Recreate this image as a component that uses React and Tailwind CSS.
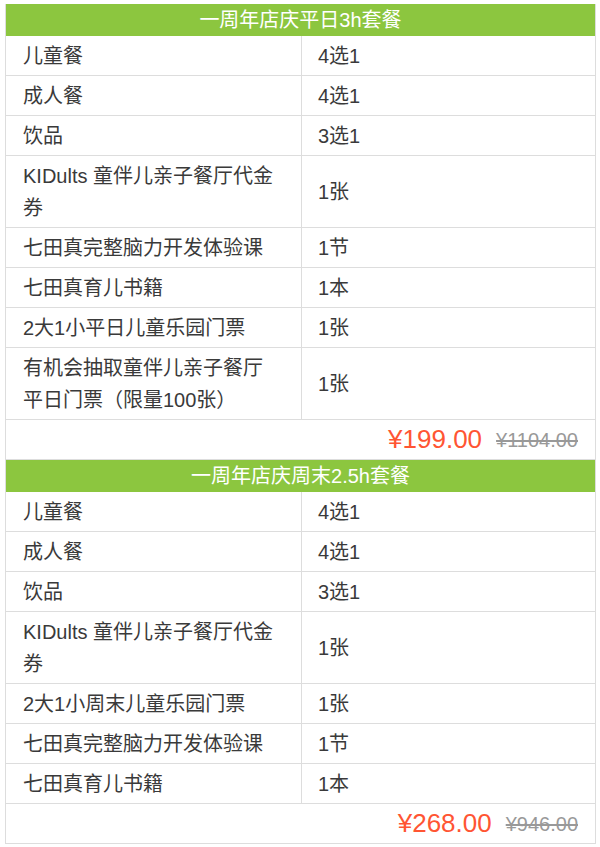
import React from 'react';

const taocan = [
    {
        titulo: '一周年店庆平日3h套餐',
        itens: [
            ['儿童餐', '4选1'],
            ['成人餐', '4选1'],
            ['饮品', '3选1'],
            ['KIDults 童伴儿亲子餐厅代金券', '1张'],
            ['七田真完整脑力开发体验课', '1节'],
            ['七田真育儿书籍', '1本'],
            ['2大1小平日儿童乐园门票', '1张'],
            ['有机会抽取童伴儿亲子餐厅平日门票（限量100张）', '1张'],
        ],
        preco: '¥199.00',
        original: '¥1104.00',
    },
    {
        titulo: '一周年店庆周末2.5h套餐',
        itens: [
            ['儿童餐', '4选1'],
            ['成人餐', '4选1'],
            ['饮品', '3选1'],
            ['KIDults 童伴儿亲子餐厅代金券', '1张'],
            ['2大1小周末儿童乐园门票', '1张'],
            ['七田真完整脑力开发体验课', '1节'],
            ['七田真育儿书籍', '1本'],
        ],
        preco: '¥268.00',
        original: '¥946.00',
    },
];

export default function App() {
    return (
        <div className="bg-white min-h-[847px] pt-[4px] pl-[5px]" style={{ fontFamily: '"Liberation Sans", "Noto Sans CJK SC", sans-serif' }}>
            <div className="w-[591px] border-l border-r border-[#dddddd] text-[20px] text-[#3a3a3a]">
                {taocan.map(t => (
                    <div key={t.titulo}>
                        <div className="h-[32px] bg-[#8cc63f] text-white text-center leading-[32px]">
                            {t.titulo}
                        </div>
                        {t.itens.map(([nome, qtd], i) => (
                            <div key={i} className="grid grid-cols-[296px_1fr] border-b border-[#dddddd]">
                                <div className="pl-[17px] pr-[19px] py-[3.5px] leading-[32px] border-r border-[#dddddd]">{nome}</div>
                                <div className="pl-[16px] flex items-center leading-[32px]">{qtd}</div>
                            </div>
                        ))}
                        <div className="h-[40px] flex items-center justify-end gap-[14px] pr-[17px] border-b border-[#dddddd]">
                            <span className="text-[26px] text-[#ff5533]">{t.preco}</span>
                            <span className="text-[20px] text-[#999999] line-through">{t.original}</span>
                        </div>
                    </div>
                ))}
            </div>
        </div>
    );
}
